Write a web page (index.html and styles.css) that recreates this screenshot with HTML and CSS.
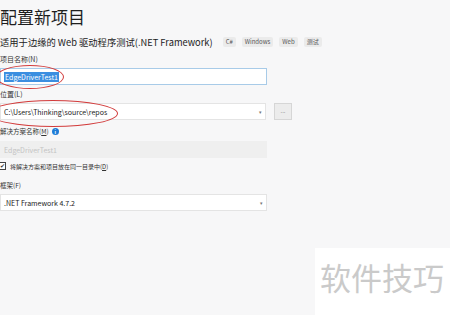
FILE: index.html
```html
<!DOCTYPE html>
<html>
  <head>
    <title>配置新项目</title>
    <meta charset="UTF-8">
    <link rel="stylesheet" href="styles.css">
  </head>
  <body>

  <!--Header-->
  <h1 class="title">配置新项目</h1>
  <div class="subtitle">
    <span class="subtitle-text">适用于边缘的 Web 驱动程序测试(.NET Framework)</span>
    <span class="tag">C#</span>
    <span class="tag">Windows</span>
    <span class="tag">Web</span>
    <span class="tag">测试</span>
  </div>

  <!--Form-->
  <div class="form">
    <div class="label label-first">项目名称(N)</div>
    <div class="input input-active"><span class="selected">EdgeDriverTest1</span></div>

    <div class="label label-loc">位置(L)</div>
    <div class="row">
      <div class="input select"><span>C:\Users\Thinking\source\repos</span><span class="arrow">▾</span></div>
      <button class="browse">...</button>
    </div>

    <div class="label label-sol">解决方案名称(<u>M</u>) <span class="info">i</span></div>
    <div class="input disabled">EdgeDriverTest1</div>

    <div class="check-row">
      <span class="checkbox">✔</span>
      <span>将解决方案和项目放在同一目录中(<u>D</u>)</span>
    </div>

    <div class="label label-fw">框架(F)</div>
    <div class="input select"><span>.NET Framework 4.7.2</span><span class="arrow">▾</span></div>
  </div>

  <!--Red marks drawn over the fields-->
  <div class="mark mark-name"></div>
  <div class="mark mark-loc"></div>

  <!--Watermark-->
  <div class="watermark">软件技巧</div>

  </body>
</html>
```

FILE: styles.css
```css
html, body {
  margin: 0;
  padding: 0;
  width: 450px;
  height: 315px;
  overflow: hidden;
  background-color: #f7f7f8;
  font-family: "Noto Sans CJK SC", "Noto Sans", sans-serif;
  color: #1e1e1e;
  position: relative;
}

.title {
  margin: 0;
  padding-top: 4px;
  font-size: 17px;
  font-weight: normal;
  line-height: 25px;
  color: #1e1e1e;
}

.subtitle {
  display: flex;
  align-items: center;
  margin-top: 6px;
  height: 14px;
}

.subtitle-text {
  font-size: 9.3px;
  color: #222;
  margin-right: 10px;
  white-space: nowrap;
}

.tag {
  font-size: 6px;
  line-height: 10px;
  padding: 0 3px;
  margin-right: 6px;
  background-color: #ebebeb;
  color: #555;
  border-radius: 2px;
}

.form {
  width: 292px;
}

.label {
  font-size: 7px;
  line-height: 10px;
  color: #333;
  white-space: nowrap;
}

.label-first { margin-top: 5px; }
.label-loc { margin-top: 4px; }
.label-sol { margin-top: 6px; display: flex; align-items: center; font-size: 6.5px; }
.label-fw { margin-top: 9px; font-size: 6.5px; }

.info {
  display: inline-block;
  width: 7px;
  height: 7px;
  margin-left: 3px;
  border-radius: 50%;
  background-color: #1e7bd6;
  color: #fff;
  font-size: 5px;
  line-height: 7px;
  text-align: center;
  font-weight: bold;
}

.input {
  box-sizing: border-box;
  width: 267px;
  height: 17px;
  margin-top: 4px;
  padding: 0 3px;
  display: flex;
  align-items: center;
  justify-content: space-between;
  font-size: 7px;
  color: #222;
  background-color: #fff;
  border: 1px solid #e4e4e4;
}

.input-active {
  border-color: #a8cbe8;
}

.selected {
  background-color: #3b8ee0;
  color: #fff;
  padding: 0 1px;
}

.row {
  display: flex;
  align-items: center;
}

.row .input {
  margin-top: 4px;
}

.arrow {
  font-size: 5px;
  color: #777;
}

.browse {
  box-sizing: border-box;
  width: 18px;
  height: 17px;
  margin: 3px 0 0 8px;
  padding: 0;
  font-size: 6px;
  color: #555;
  background-color: #ececec;
  border: 1px solid #d6d6d6;
}

.disabled {
  margin-top: 5px;
  background-color: #efefef;
  border-color: #efefef;
  color: #c4c4c4;
}

.check-row {
  display: flex;
  align-items: center;
  margin-top: 3px;
  height: 10px;
  font-size: 6px;
  color: #333;
  white-space: nowrap;
}

.checkbox {
  box-sizing: border-box;
  width: 8px;
  height: 8px;
  margin: 0 4px 0 -2px;
  border: 1px solid #444;
  background-color: #fff;
  font-size: 6px;
  line-height: 6px;
  text-align: center;
}

/* red hand drawn circles */
.mark {
  position: absolute;
  border: 1px solid #d23c3c;
  border-radius: 50%;
}

.mark-name {
  left: -4px;
  top: 65px;
  width: 66px;
  height: 22px;
}

.mark-loc {
  left: -12px;
  top: 100px;
  width: 128px;
  height: 25px;
}

.watermark {
  position: absolute;
  left: 315px;
  top: 248px;
  width: 135px;
  height: 67px;
  background-color: #fff;
  box-sizing: border-box;
  padding: 9px 0 0 5px;
  font-size: 31px;
  line-height: 40px;
  color: #cacaca;
  white-space: nowrap;
}
```
